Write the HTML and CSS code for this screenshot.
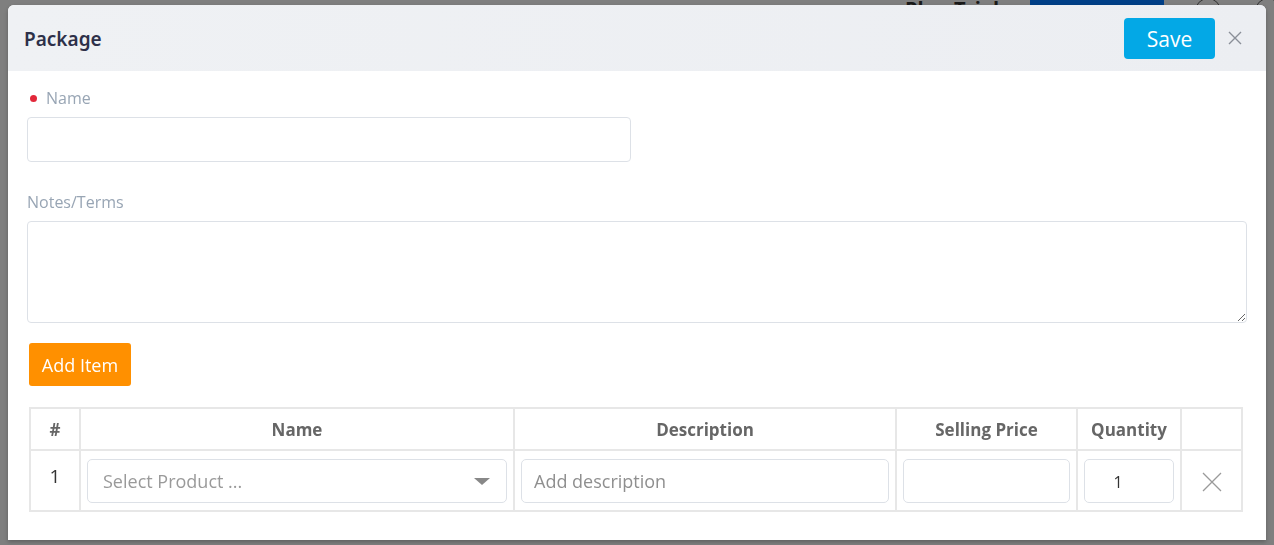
FILE: index.html
```html
<!DOCTYPE html>
<html lang="en">
<head>
    <meta charset="UTF-8">
    <meta name="viewport" content="width=device-width, initial-scale=1.0">
    <title>Package</title>
    <link rel="stylesheet" href="styles.css">
</head>
<body>
    <div class="page-bar">
        <span class="plan-text">Plan Trial</span>
        <span class="upgrade-btn"></span>
        <span class="bar-icon"></span>
        <span class="bar-icon last"></span>
    </div>

    <div class="overlay">
        <div class="modal">
            <div class="modal-header">
                <h2 class="modal-title">Package</h2>
                <div class="header-actions">
                    <button class="btn-save">Save</button>
                    <button class="btn-close" aria-label="Close">
                        <svg width="14" height="14" viewBox="0 0 14 14"><path d="M1 1L13 13M13 1L1 13" stroke="#8a8f98" stroke-width="1.4" fill="none"/></svg>
                    </button>
                </div>
            </div>

            <div class="modal-body">
                <div class="field">
                    <label class="field-label required">Name</label>
                    <input class="text-input name-input" type="text">
                </div>

                <div class="field notes">
                    <label class="field-label">Notes/Terms</label>
                    <textarea class="text-input notes-input"></textarea>
                </div>

                <button class="btn-add">Add Item</button>

                <table class="items">
                    <colgroup>
                        <col style="width:50px">
                        <col style="width:434px">
                        <col style="width:382px">
                        <col style="width:181px">
                        <col style="width:104px">
                        <col style="width:61px">
                    </colgroup>
                    <thead>
                        <tr>
                            <th>#</th>
                            <th>Name</th>
                            <th>Description</th>
                            <th>Selling Price</th>
                            <th>Quantity</th>
                            <th></th>
                        </tr>
                    </thead>
                    <tbody>
                        <tr>
                            <td class="row-num">1</td>
                            <td>
                                <div class="select-box">
                                    <span class="select-placeholder">Select Product ...</span>
                                    <span class="caret"></span>
                                </div>
                            </td>
                            <td><input class="cell-input" type="text" placeholder="Add description"></td>
                            <td><input class="cell-input" type="text"></td>
                            <td><input class="cell-input qty" type="text" value="1"></td>
                            <td class="row-remove">
                                <svg width="20" height="20" viewBox="0 0 20 20"><path d="M1 1L19 19M19 1L1 19" stroke="#9a9a9a" stroke-width="1.3" fill="none"/></svg>
                            </td>
                        </tr>
                    </tbody>
                </table>
            </div>
        </div>
    </div>
</body>
</html>
```

FILE: styles.css
```css
body, html {
    margin: 0;
    padding: 0;
    height: 100%;
    overflow: hidden;
}
body {
    background: #7f7f7f;
    font-family: "Open Sans", "Noto Sans", sans-serif;
}
.page-bar {
    display: flex;
    align-items: flex-end;
    height: 6px;
    padding-left: 905px;
    overflow: hidden;
}
.plan-text {
    font-size: 20px;
    font-weight: 700;
    color: #1a1a1a;
    line-height: 18px;
    margin-bottom: -12px;
    width: 105px;
    flex-shrink: 0;
}
.upgrade-btn {
    background: #003f87;
    width: 134px;
    height: 6px;
    margin-left: 20px;
    flex-shrink: 0;
}
.bar-icon {
    width: 24px;
    height: 24px;
    border: 1px solid #333;
    border-radius: 50%;
    margin-left: 31px;
    margin-bottom: -18px;
    flex-shrink: 0;
}
.bar-icon.last {
    margin-left: 34px;
}
.overlay {
    position: fixed;
    top: 0;
    left: 0;
    right: 0;
    bottom: 0;
    padding: 5px 8px 0 8px;
}
.modal {
    width: 1258px;
    height: 535px;
    background: #fff;
    border-radius: 6px 6px 0 0;
    box-shadow: 0 2px 4px rgba(0,0,0,0.25);
    overflow: hidden;
}
.modal-header {
    display: flex;
    align-items: center;
    justify-content: space-between;
    height: 66px;
    padding: 0 21px 0 16px;
    background: linear-gradient(90deg, #eff1f4, #eceef2);
}
.modal-title {
    margin: 0;
    font-family: "Noto Sans", "Open Sans", sans-serif;
    font-size: 19px;
    font-weight: 600;
    color: #2d3049;
    padding-top: 2px;
}
.header-actions {
    display: flex;
    align-items: center;
    gap: 10px;
}
.btn-save {
    width: 91px;
    height: 41px;
    border: none;
    border-radius: 4px;
    background: #03a8e6;
    color: #fff;
    font-family: "Open Sans", sans-serif;
    font-size: 21px;
    padding: 0;
    margin-top: 1px;
}
.btn-close {
    background: none;
    border: none;
    padding: 0;
    width: 20px;
    height: 20px;
    display: flex;
    align-items: center;
    justify-content: center;
    margin-top: -1px;
}
.modal-body {
    padding: 16px 19px 0 19px;
}
.field {
    display: flex;
    flex-direction: column;
}
.field.notes {
    margin-top: 29px;
}
.field-label {
    font-size: 16px;
    line-height: 22px;
    color: #98a5b4;
    margin-bottom: 8px;
}
.field-label.required::before {
    content: "";
    display: inline-block;
    width: 7px;
    height: 7px;
    border-radius: 50%;
    background: #e2283a;
    margin: 0 9px 2px 3px;
    vertical-align: middle;
}
.text-input {
    box-sizing: border-box;
    border: 1px solid #dde1e7;
    border-radius: 4px;
    font-family: inherit;
    font-size: 16px;
    outline: none;
}
.name-input {
    width: 604px;
    height: 45px;
}
.notes-input {
    width: 1220px;
    height: 102px;
    resize: vertical;
}
.btn-add {
    display: block;
    margin: 20px 0 0 2px;
    width: 102px;
    height: 43px;
    border: none;
    border-radius: 3px;
    background: #ff9000;
    color: #fff;
    font-family: "Open Sans", sans-serif;
    font-size: 18px;
    padding: 0;
}
.items {
    margin: 21px 0 0 2px;
    width: 1212px;
    table-layout: fixed;
    border-collapse: collapse;
}
.items th, .items td {
    border: 2px solid #e7e7e7;
}
.items th {
    height: 40px;
    font-size: 17px;
    font-weight: 700;
    color: #666;
    text-align: center;
    padding: 0;
}
.items td {
    height: 59px;
    padding: 0 6px;
}
.items td.row-num {
    height: auto;
    vertical-align: top;
    text-align: center;
    font-size: 19px;
    color: #333;
    padding-top: 12px;
}
.select-box {
    box-sizing: border-box;
    display: flex;
    align-items: center;
    justify-content: space-between;
    height: 44px;
    border: 1px solid #dde1e7;
    border-radius: 5px;
    padding: 0 16px 0 15px;
}
.select-placeholder {
    font-size: 18px;
    color: #9a9a9a;
}
.caret {
    width: 0;
    height: 0;
    border-left: 8px solid transparent;
    border-right: 8px solid transparent;
    border-top: 7px solid #888;
    margin-top: 1px;
}
.cell-input {
    box-sizing: border-box;
    width: 100%;
    height: 44px;
    border: 1px solid #dde1e7;
    border-radius: 5px;
    padding: 0 12px;
    font-family: inherit;
    font-size: 18px;
    color: #333;
    outline: none;
}
.cell-input::placeholder {
    color: #8f8f8f;
}
.cell-input.qty {
    text-align: center;
    font-size: 16px;
    padding: 2px 22px 0 0;
}
.row-remove {
    text-align: center;
}
.row-remove svg {
    display: inline-block;
    vertical-align: middle;
}
```
